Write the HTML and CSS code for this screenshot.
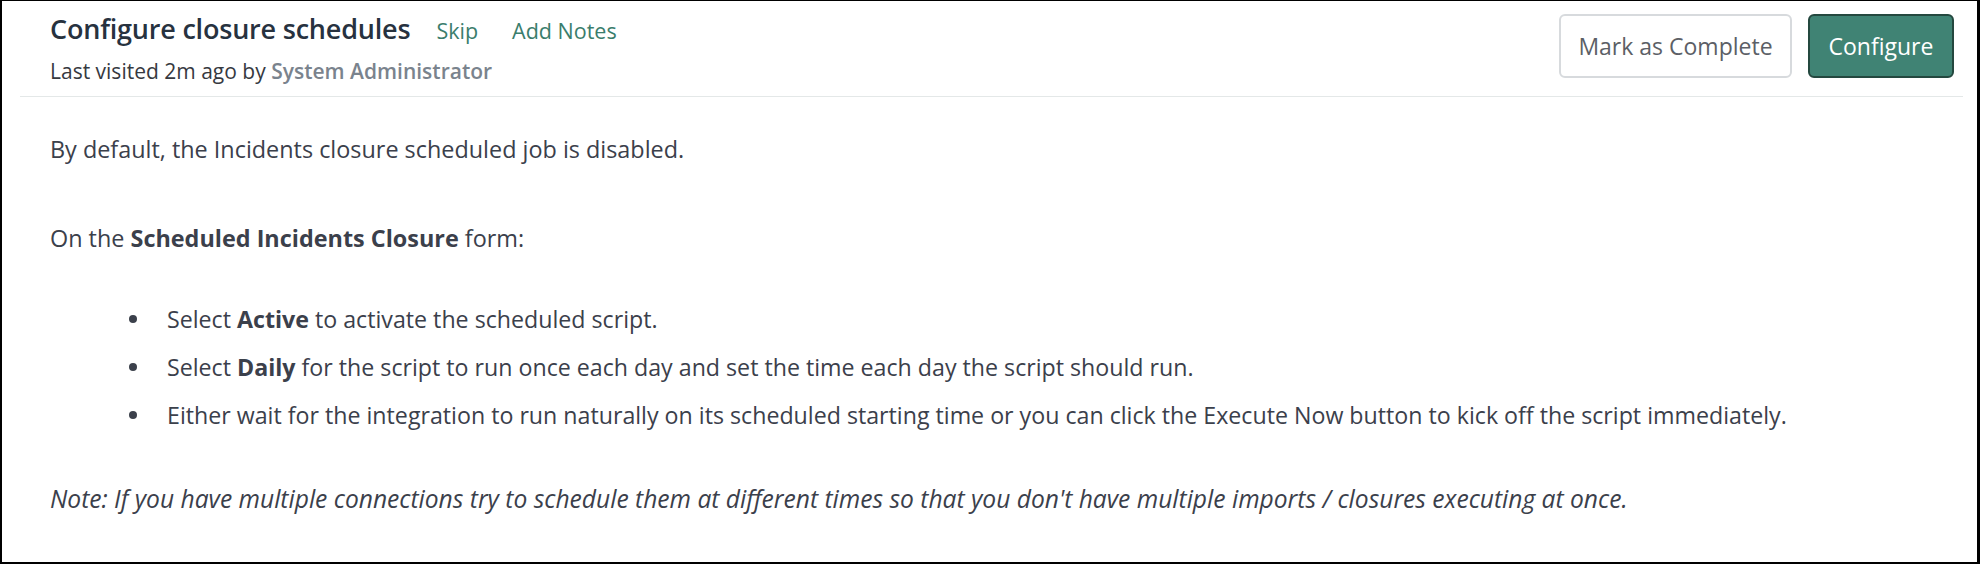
FILE: index.html
```html
<!DOCTYPE html>
<html>
<head>
<meta charset="utf-8">
<link rel="stylesheet" href="styles.css">
</head>
<body>
<div class="frame">
  <div class="header">
    <div class="head-text">
      <div class="title-row">
        <h1 class="title">Configure closure schedules</h1>
        <a class="link">Skip</a>
        <a class="link">Add Notes</a>
      </div>
      <div class="visited">Last visited 2m ago by <span class="who">System Administrator</span></div>
    </div>
    <div class="actions">
      <button class="btn btn-outline">Mark as Complete</button>
      <button class="btn btn-primary">Configure</button>
    </div>
  </div>
  <div class="content">
    <p class="para">By default, the Incidents closure scheduled job is disabled.</p>
    <p class="para">On the <b>Scheduled Incidents Closure</b> form:</p>
    <ul class="steps">
      <li><span>Select <b>Active</b> to activate the scheduled script.</span></li>
      <li><span>Select <b>Daily</b> for the script to run once each day and set the time each day the script should run.</span></li>
      <li><span>Either wait for the integration to run naturally on its scheduled starting time or you can click the Execute Now button to kick off the script immediately.</span></li>
    </ul>
    <p class="note">Note: If you have multiple connections try to schedule them at different times so that you don't have multiple imports / closures executing at once.</p>
  </div>
</div>
</body>
</html>
```

FILE: styles.css
```css
html, body {
  margin: 0;
  padding: 0;
  background: #fff;
}
.frame {
  box-sizing: border-box;
  width: 1980px;
  height: 564px;
  border-style: solid;
  border-color: #000;
  border-width: 1px 3px 2px 2px;
  font-family: "Open Sans", Lato, sans-serif;
  color: #3b404b;
  overflow: hidden;
}
.header {
  margin: 0 14px 0 18px;
  padding: 11px 9px 12px 30px;
  border-bottom: 1px solid #e4e8e8;
  display: flex;
  justify-content: space-between;
  align-items: flex-start;
}
.title-row {
  display: flex;
  align-items: baseline;
  height: 34px;
}
.title {
  margin: 0 26px 0 0;
  font-size: 27px;
  line-height: 34px;
  font-weight: 600;
  color: #27323f;
  letter-spacing: -0.2px;
}
.link {
  font-size: 21.5px;
  color: #3a7d6c;
}
.link + .link {
  margin-left: 34px;
}
.visited {
  margin-top: 12px;
  font-size: 21px;
  line-height: 26px;
  color: #36393f;
}
.who {
  font-weight: 600;
  color: #7a838d;
}
.actions {
  display: flex;
  gap: 16px;
  padding-top: 2px;
}
.btn {
  font-family: inherit;
  font-size: 23px;
  height: 64px;
  border-radius: 6px;
  padding: 0;
  cursor: pointer;
}
.btn-outline {
  width: 233px;
  background: #fff;
  border: 2px solid #d7dadd;
  color: #5c5f66;
}
.btn-primary {
  width: 146px;
  background: #408374;
  border: 2px solid #24483f;
  color: #fff;
}
.content {
  padding: 38px 0 0 48px;
  font-size: 23.4px;
}
.para {
  margin: 0 0 61px 0;
  line-height: 28px;
}
.para b, .steps b {
  font-weight: 700;
}
.steps {
  list-style: none;
  margin: -8px 0 56px 0;
  padding: 0;
  font-size: 23.2px;
}
.steps li {
  display: flex;
  align-items: center;
  line-height: 28px;
  margin-bottom: 20px;
}
.steps li::before {
  content: "";
  flex: none;
  width: 8px;
  height: 8px;
  border-radius: 50%;
  background: #3b404b;
  margin: 0 30px 0 79px;
}
.note {
  margin: 0;
  font-style: italic;
  font-size: 24.6px;
  line-height: 28px;
}
```
